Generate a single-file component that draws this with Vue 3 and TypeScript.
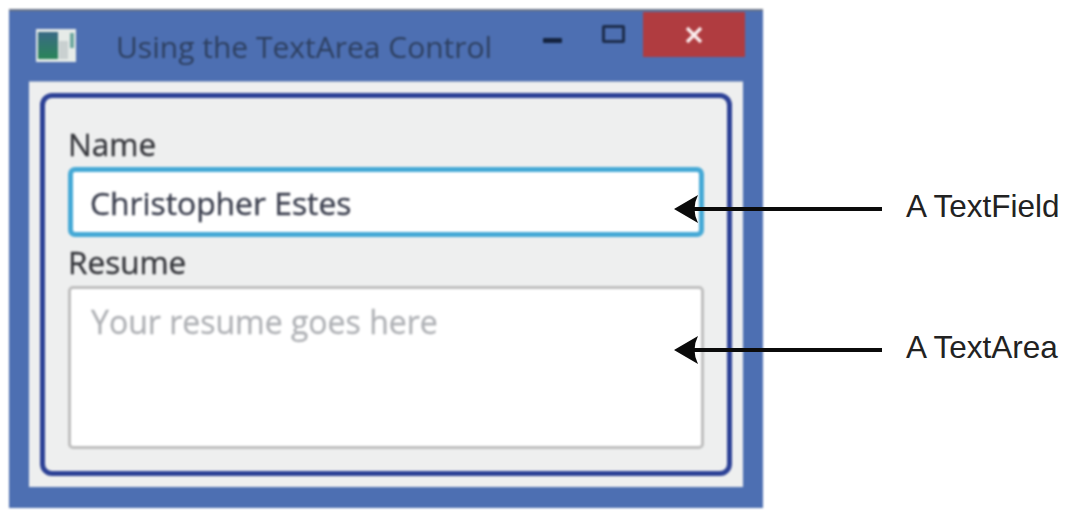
<script setup lang="ts">
interface Callout {
  label: string;
  y: number;
}

const title = "Using the TextArea Control";
const callouts: Callout[] = [
  { label: "A TextField", y: 209 },
  { label: "A TextArea", y: 350 },
];
</script>

<template>
  <div class="stage">
    <div class="window">
      <header class="titlebar">
        <svg class="app-icon" width="40" height="33" viewBox="0 0 40 33">
          <defs>
            <linearGradient id="icon-fill" x1="0" y1="0" x2="0" y2="1">
              <stop offset="0" stop-color="#3a6a85" />
              <stop offset="1" stop-color="#2a8558" />
            </linearGradient>
          </defs>
          <rect width="40" height="33" fill="#e6ebe8" />
          <rect x="2" y="3" width="20" height="27" fill="url(#icon-fill)" />
          <rect x="23" y="12" width="9" height="18" fill="#c9d0d0" />
          <rect x="34" y="4" width="4" height="15" fill="#6fa8a0" />
        </svg>
        <span class="title">{{ title }}</span>
        <div class="controls">
          <span class="minimize"></span>
          <span class="maximize"></span>
          <button class="close" type="button">
            <svg width="18" height="18" viewBox="0 0 18 18">
              <path d="M2 2 16 16M16 2 2 16" stroke="#fbeeee" stroke-width="3.4" fill="none" />
            </svg>
          </button>
        </div>
      </header>
      <div class="client">
        <form class="pane">
          <label class="field-label">Name</label>
          <div class="text-field">Christopher Estes</div>
          <label class="field-label resume">Resume</label>
          <div class="text-area">Your resume goes here</div>
        </form>
      </div>
    </div>

    <div
      v-for="item in callouts"
      :key="item.label"
      class="callout"
      :style="{ top: item.y - 20 + 'px' }"
    >
      <svg class="arrow" width="212" height="40" viewBox="0 0 212 40">
        <path d="M20 20H211" stroke="#0b0b0b" stroke-width="4" fill="none" />
        <path d="M3 20 27 6 Q20 20 27 34Z" fill="#0b0b0b" />
      </svg>
      <span class="callout-label">{{ item.label }}</span>
    </div>
  </div>
</template>

<style>
html,
body {
  margin: 0;
  background: #fff;
}
</style>

<style scoped>
.stage {
  position: relative;
  width: 1067px;
  height: 517px;
  padding: 9px 0 0 9px;
  box-sizing: border-box;
  overflow: hidden;
  background: #fff;
}

.window {
  width: 754px;
  height: 499px;
  box-sizing: border-box;
  padding: 0 20px 21px;
  display: flex;
  flex-direction: column;
  background: #4d6fb2;
  border-top: 2px solid #6b7486;
  filter: blur(0.8px);
}

.titlebar {
  height: 71px;
  flex: none;
  display: flex;
  align-items: flex-start;
}

.app-icon {
  margin: 18px 0 0 7px;
  flex: none;
}

.title {
  margin: 16px 0 0 40px;
  font-family: "Open Sans", "Noto Sans", sans-serif;
  font-size: 30px;
  line-height: 39px;
  color: #2d3f5f;
  white-space: nowrap;
}

.controls {
  margin-left: auto;
  margin-right: -2px;
  display: flex;
  align-items: flex-start;
}

.minimize {
  width: 19px;
  height: 5px;
  margin: 27px 40px 0 0;
  background: #14233f;
  border-radius: 1px;
}

.maximize {
  width: 17px;
  height: 12px;
  margin: 14px 18px 0 0;
  border: 3px solid #1d2d4c;
  border-radius: 2px;
}

.close {
  width: 102px;
  height: 45px;
  margin-top: 1px;
  padding: 0;
  border: 0;
  background: #b03c40;
  display: flex;
  align-items: center;
  justify-content: center;
}

.client {
  flex: 1;
  padding: 11px;
  background: #eeefef;
  box-shadow: 0 -1px 0 #9fb0cc;
}

.pane {
  height: 100%;
  box-sizing: border-box;
  padding: 32px 23px 22px;
  display: flex;
  flex-direction: column;
  background: #eeefef;
  border: 5.5px solid #2c4196;
  border-radius: 12px;
}

.field-label {
  flex: none;
  font-family: "Open Sans", "Noto Sans", sans-serif;
  font-size: 31.5px;
  line-height: 37px;
  color: #36373c;
  -webkit-text-stroke: 0.4px #36373c;
  margin-top: -5px;
  padding-bottom: 5px;
}

.resume {
  margin-top: 5px;
  padding-bottom: 5px;
  line-height: 39px;
}

.text-field {
  height: 70px;
  flex: none;
  box-sizing: border-box;
  padding-left: 17px;
  display: flex;
  align-items: center;
  font-family: "Open Sans", "Noto Sans", sans-serif;
  font-size: 31.8px;
  color: #3d4150;
  -webkit-text-stroke: 0.4px #3d4150;
  background: #fff;
  border: 5px solid #45a9d6;
  border-radius: 7px;
}

.text-area {
  flex: 1;
  box-sizing: border-box;
  padding: 13px 20px;
  font-family: "Open Sans", "Noto Sans", sans-serif;
  font-size: 32px;
  line-height: 40px;
  color: #b0b2b6;
  -webkit-text-stroke: 0.3px #b0b2b6;
  background: #fff;
  border: 3px solid #bfbfbf;
  border-radius: 5px;
}

.callout {
  position: absolute;
  left: 671px;
  display: flex;
  align-items: center;
  height: 40px;
}

.arrow {
  flex: none;
}

.callout-label {
  margin: 0 0 5px 23px;
  font-family: "Liberation Sans", Arial, sans-serif;
  font-size: 31.5px;
  color: #222;
  white-space: nowrap;
}
</style>
